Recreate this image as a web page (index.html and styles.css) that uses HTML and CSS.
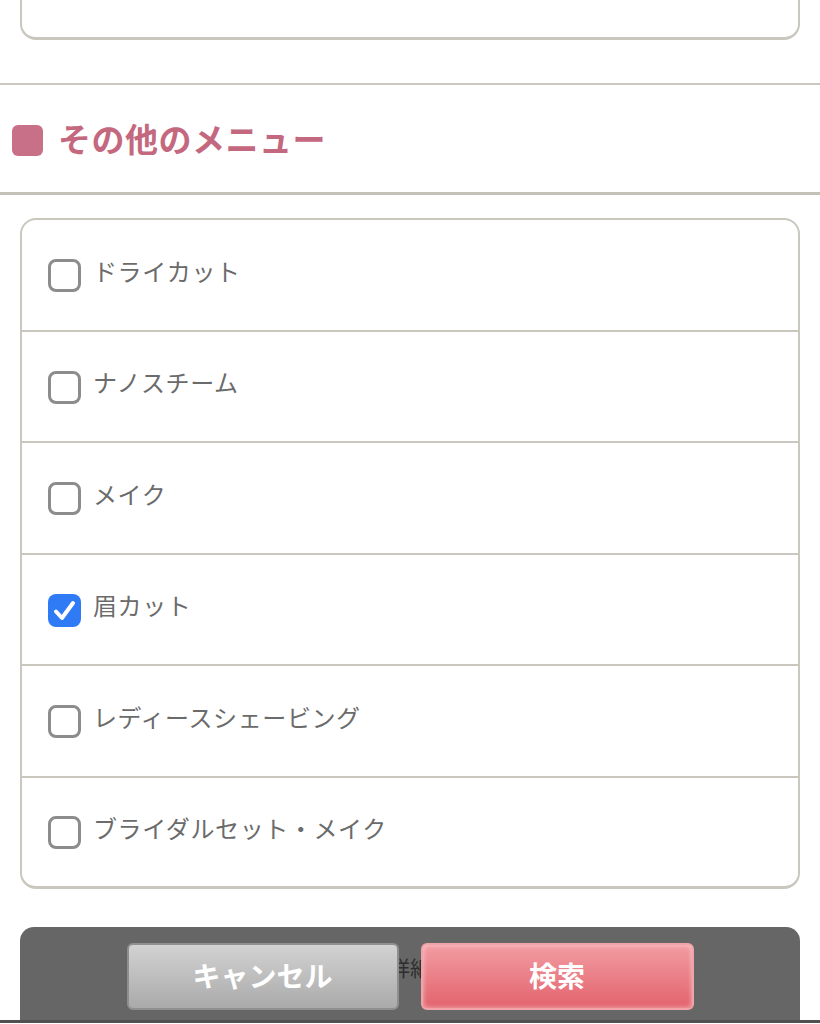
FILE: index.html
```html
<!DOCTYPE html>
<html lang="ja">
<head>
<meta charset="utf-8">
<link rel="stylesheet" href="styles.css">
</head>
<body>
<div class="top-card"></div>
<div class="rule"></div>
<div class="section-head">
  <span class="head-mark"></span>
  <h2 class="head-title">その他のメニュー</h2>
</div>
<div class="rule thick"></div>
<div class="card">
  <label class="row"><span class="box"></span><span class="label">ドライカット</span></label>
  <label class="row"><span class="box"></span><span class="label">ナノスチーム</span></label>
  <label class="row"><span class="box"></span><span class="label">メイク</span></label>
  <label class="row"><span class="box checked"><svg viewBox="0 0 33 33" width="33" height="33"><path d="M8 17.5 L14 24 L25 9" fill="none" stroke="#fff" stroke-width="4" stroke-linecap="round" stroke-linejoin="round"/></svg></span><span class="label">眉カット</span></label>
  <label class="row"><span class="box"></span><span class="label">レディースシェービング</span></label>
  <label class="row"><span class="box"></span><span class="label">ブライダルセット・メイク</span></label>
</div>
<div class="bar">
  <span class="behind">詳細</span>
  <button class="btn cancel">キャンセル</button>
  <button class="btn search">検索</button>
</div>
<div class="bottom-line"></div>
</body>
</html>
```
FILE: styles.css
```css
html, body {
  margin: 0;
  padding: 0;
  background: #fff;
  font-family: "Noto Sans CJK JP", "Noto Sans", sans-serif;
}
.top-card {
  margin: 0 20px;
  height: 37px;
  border: 2px solid #c9c7be;
  border-top: none;
  border-bottom-width: 3px;
  border-radius: 0 0 16px 16px;
}
.rule {
  margin-top: 43px;
  height: 2px;
  background: #c9c7be;
}
.rule.thick {
  margin-top: 0;
  height: 3px;
  background: #c3c1b8;
}
.section-head {
  height: 107px;
  display: flex;
  align-items: center;
  padding-left: 12px;
  box-sizing: border-box;
  padding-top: 4px;
}
.head-mark {
  width: 31px;
  height: 31px;
  border-radius: 6px;
  background: #c87088;
  flex: none;
}
.head-title {
  margin: 0 0 0 15px;
  font-size: 33px;
  font-weight: 700;
  color: #c4687f;
  line-height: 1;
  letter-spacing: 0.5px;
  position: relative;
  top: -2px;
}
.card {
  margin: 23px 20px 0;
  border: 2px solid #c9c7be;
  border-bottom-width: 3px;
  border-radius: 16px;
  display: flex;
  flex-direction: column;
}
.row {
  height: 109.5px;
  display: flex;
  align-items: center;
  padding-left: 26px;
  border-bottom: 2px solid #c9c7be;
}
.row:last-child {
  border-bottom: none;
  height: 108px;
}
.box {
  width: 33px;
  height: 33px;
  box-sizing: border-box;
  border: 3px solid #8c8c8c;
  border-radius: 8px;
  flex: none;
  position: relative;
  top: 1px;
}
.box.checked {
  border: none;
  background: #2f7bf5;
}
.box svg {
  display: block;
}
.label {
  margin-left: 12px;
  font-size: 24px;
  color: #6b6b6b;
  line-height: 1;
  position: relative;
  top: -4px;
  letter-spacing: 0.6px;
}
.bar {
  position: relative;
  margin: 38px 20px 0;
  height: 93px;
  background: #666666;
  border-radius: 14px 14px 0 0;
  display: flex;
  justify-content: center;
  align-items: flex-start;
  gap: 22px;
  padding-top: 16px;
  box-sizing: border-box;
}
.behind {
  position: absolute;
  left: 50%;
  top: 30px;
  transform: translateX(-50%);
  font-size: 21px;
  color: #2e2e2e;
  line-height: 1;
  z-index: 0;
}
.btn {
  position: relative;
  z-index: 1;
  width: 273px;
  height: 67px;
  border-radius: 6px;
  font-family: "Noto Sans CJK JP", "Noto Sans", sans-serif;
  font-size: 28px;
  font-weight: 700;
  color: #fff;
  padding: 0 0 3px;
  margin: 0;
  cursor: pointer;
}
.cancel {
  width: 272px;
  background: linear-gradient(#d2d2d2, #aaaaaa);
  border: 2px solid #8f8f8f;
}
.search {
  background: linear-gradient(#f29ca2, #e3636d);
  border: 2px solid #f0a3a8;
  box-shadow: inset 0 0 5px rgba(255,255,255,0.55);
}
.bottom-line {
  height: 3px;
  background: #505050;
}
```
